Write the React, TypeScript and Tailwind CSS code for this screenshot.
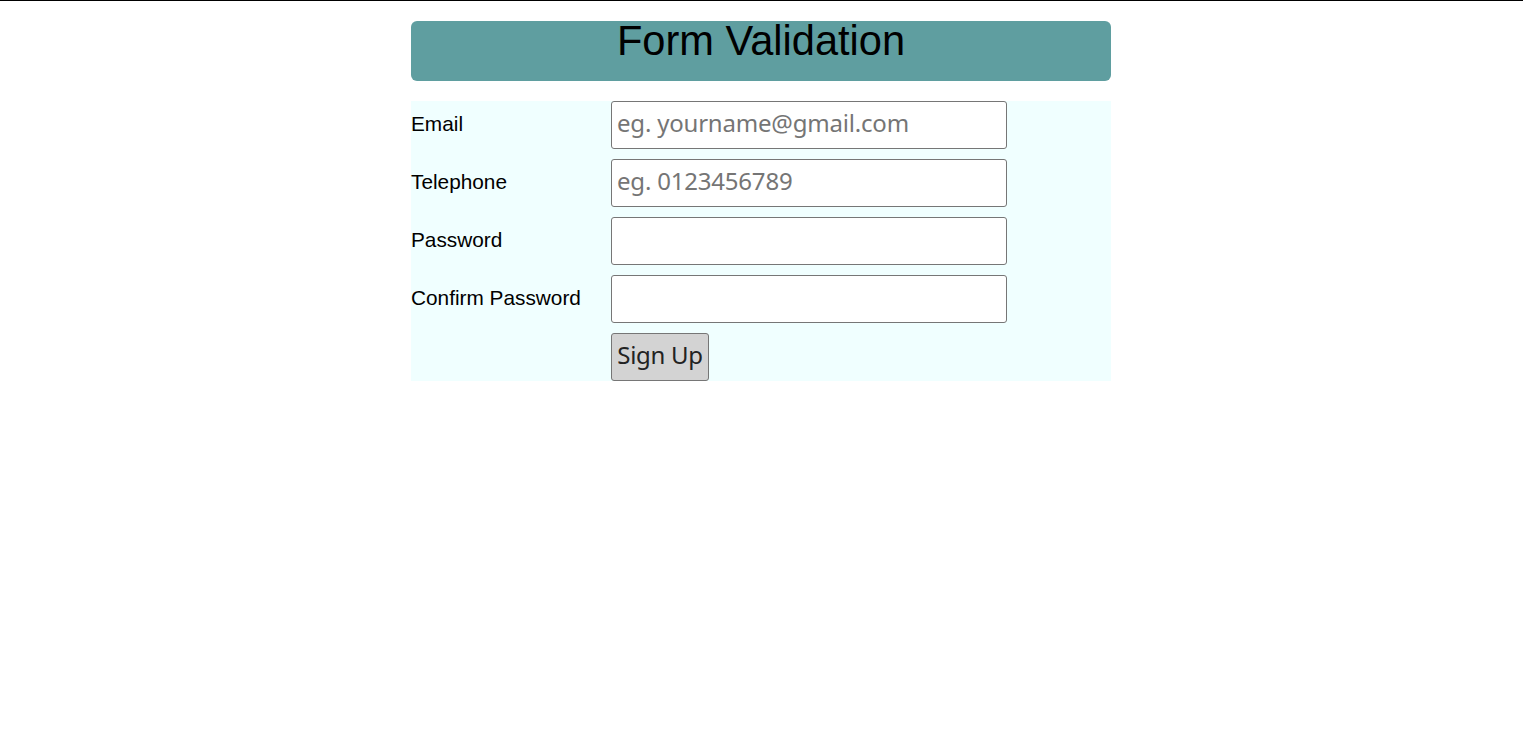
import React from "react";

export default function App() {
  const rows = [
    { label: "Email", type: "email", placeholder: "eg. yourname@gmail.com" },
    { label: "Telephone", type: "tel", placeholder: "eg. 0123456789" },
    { label: "Password", type: "password", placeholder: "" },
    { label: "Confirm Password", type: "password", placeholder: "" },
  ];
  return (
    <div className="min-h-[734px] bg-white border-t border-black">
      <div className="w-[700px] ml-[411px] pt-5">
        <div className="h-[60px] bg-[#5f9ea0] rounded-[6px]">
          <h1
            className="text-center text-[41.6px] leading-[40px] text-black"
            style={{ fontFamily: '"Liberation Sans", Arial, sans-serif' }}
          >
            Form Validation
          </h1>
        </div>
        <form
          className="mt-5 bg-[#f0ffff] flex flex-col gap-[10px]"
          onSubmit={(e) => e.preventDefault()}
        >
          {rows.map((r) => (
            <div key={r.label} className="flex items-center">
              <label
                className="w-[200px] text-[20.8px] text-black pb-[2px]"
                style={{ fontFamily: '"Liberation Sans", Arial, sans-serif' }}
              >
                {r.label}
              </label>
              <input
                type={r.type}
                placeholder={r.placeholder}
                className="w-[396px] h-[48px] border border-[#767676] rounded-[3px] bg-white px-[5px] pb-[5px] text-[24px] text-black placeholder:text-[#757575] outline-none"
                style={{ fontFamily: '"Noto Sans", "Open Sans", sans-serif', letterSpacing: "-0.2px" }}
              />
            </div>
          ))}
          <div className="flex">
            <div className="w-[200px]" />
            <button
              type="submit"
              className="w-[98px] h-[48px] border border-[#767676] rounded-[3px] bg-[#d3d3d3] text-[24px] text-[#222] flex items-center justify-center pb-[4px]"
              style={{ fontFamily: '"Noto Sans", "Open Sans", sans-serif', letterSpacing: "-0.3px" }}
            >
              Sign Up
            </button>
          </div>
        </form>
      </div>
    </div>
  );
}
